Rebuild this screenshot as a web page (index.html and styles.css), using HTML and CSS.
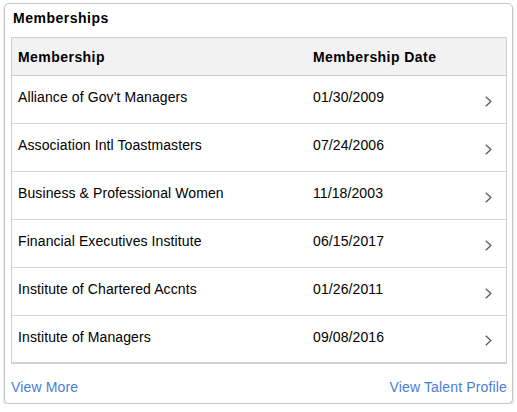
FILE: index.html
```html
<!DOCTYPE html>
<html>
<head>
<meta charset="utf-8">
<link rel="stylesheet" href="styles.css">
</head>
<body>
<div class="card">
  <div class="title">Memberships</div>
  <div class="table">
    <div class="row head">
      <div class="c-name">Membership</div>
      <div class="c-date">Membership Date</div>
      <div class="c-chev"></div>
    </div>
    <div class="row">
      <div class="c-name">Alliance of Gov't Managers</div>
      <div class="c-date">01/30/2009</div>
      <div class="c-chev"><svg width="7" height="11" viewBox="0 0 7 11"><polyline points="0.8,0.8 5.8,5.5 0.8,10.2" fill="none" stroke="#5a5a5a" stroke-width="1.3"/></svg></div>
    </div>
    <div class="row">
      <div class="c-name">Association Intl Toastmasters</div>
      <div class="c-date">07/24/2006</div>
      <div class="c-chev"><svg width="7" height="11" viewBox="0 0 7 11"><polyline points="0.8,0.8 5.8,5.5 0.8,10.2" fill="none" stroke="#5a5a5a" stroke-width="1.3"/></svg></div>
    </div>
    <div class="row">
      <div class="c-name">Business &amp; Professional Women</div>
      <div class="c-date">11/18/2003</div>
      <div class="c-chev"><svg width="7" height="11" viewBox="0 0 7 11"><polyline points="0.8,0.8 5.8,5.5 0.8,10.2" fill="none" stroke="#5a5a5a" stroke-width="1.3"/></svg></div>
    </div>
    <div class="row">
      <div class="c-name">Financial Executives Institute</div>
      <div class="c-date">06/15/2017</div>
      <div class="c-chev"><svg width="7" height="11" viewBox="0 0 7 11"><polyline points="0.8,0.8 5.8,5.5 0.8,10.2" fill="none" stroke="#5a5a5a" stroke-width="1.3"/></svg></div>
    </div>
    <div class="row">
      <div class="c-name">Institute of Chartered Accnts</div>
      <div class="c-date">01/26/2011</div>
      <div class="c-chev"><svg width="7" height="11" viewBox="0 0 7 11"><polyline points="0.8,0.8 5.8,5.5 0.8,10.2" fill="none" stroke="#5a5a5a" stroke-width="1.3"/></svg></div>
    </div>
    <div class="row last">
      <div class="c-name">Institute of Managers</div>
      <div class="c-date">09/08/2016</div>
      <div class="c-chev"><svg width="7" height="11" viewBox="0 0 7 11"><polyline points="0.8,0.8 5.8,5.5 0.8,10.2" fill="none" stroke="#5a5a5a" stroke-width="1.3"/></svg></div>
    </div>
  </div>
  <div class="footer">
    <a class="link" href="#">View More</a>
    <a class="link" href="#">View Talent Profile</a>
  </div>
</div>
</body>
</html>
```
FILE: styles.css
```css
html, body {
  margin: 0;
  padding: 0;
  background: #ffffff;
}
body {
  font-family: "Liberation Sans", Arial, sans-serif;
  font-size: 14px;
  color: #000;
}
.card {
  box-sizing: border-box;
  margin: 3px 0 0 4px;
  width: 509px;
  height: 401px;
  border: 1px solid #c6c6c6;
  border-radius: 5px;
  box-shadow: 0 2px 3px rgba(0, 0, 0, 0.22);
  padding: 0 5px 0 6px;
  display: flex;
  flex-direction: column;
}
.title {
  box-sizing: border-box;
  height: 33px;
  padding: 6px 0 0 2px;
  font-weight: bold;
  line-height: 16px;
  letter-spacing: 0.5px;
}
.table {
  border: 1px solid #cfcfcf;
  border-bottom: 2px solid #cfcfcf;
}
.row {
  display: grid;
  grid-template-columns: 295px 1fr 7px;
  align-items: center;
  box-sizing: border-box;
  height: 48px;
  padding: 0 14px 0 6px;
  border-bottom: 1px solid #d6d6d6;
  line-height: 16px;
  letter-spacing: 0.1px;
}
.row.last {
  border-bottom: none;
  height: 46px;
}
.row.head {
  height: 38px;
  background: #f2f2f2;
  border-bottom: 1px solid #cacaca;
  font-weight: bold;
  letter-spacing: 0.45px;
}
.row .c-name, .row .c-date {
  padding-bottom: 5px;
}
.row.head .c-name, .row.head .c-date {
  padding-bottom: 0;
}
.c-chev {
  display: flex;
  padding-top: 3px;
}
.c-chev svg {
  display: block;
}
.footer {
  display: flex;
  justify-content: space-between;
  margin-top: 15px;
  line-height: 16px;
}
.link {
  color: #4a7dd8;
  text-decoration: none;
  letter-spacing: 0.15px;
}
```
